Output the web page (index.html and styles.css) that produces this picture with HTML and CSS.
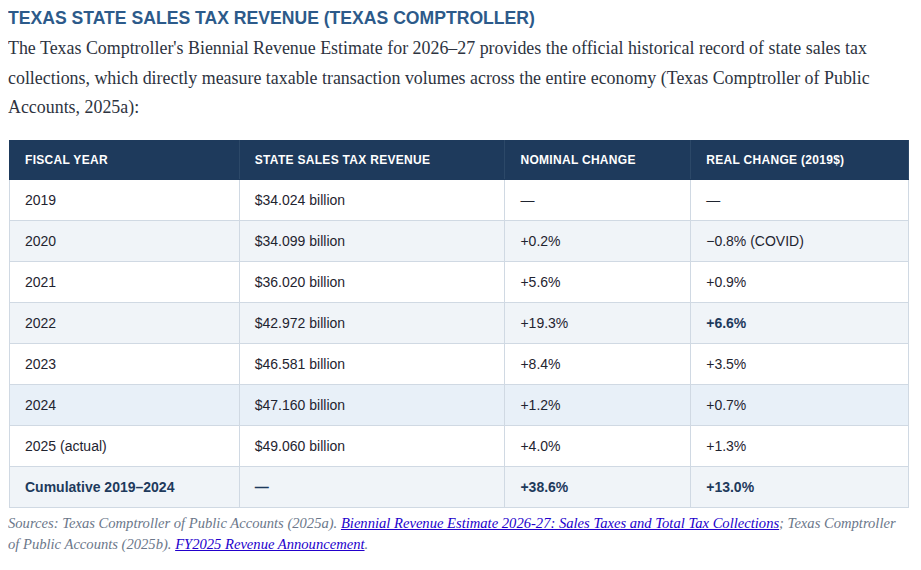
FILE: index.html
```html
<!DOCTYPE html>
<html>
<head>
<meta charset="utf-8">
<link rel="stylesheet" href="styles.css">
</head>
<body>
<h3 class="title">TEXAS STATE SALES TAX REVENUE (TEXAS COMPTROLLER)</h3>
<p class="lead">The Texas Comptroller's Biennial Revenue Estimate for 2026–27 provides the official historical record of state sales tax collections, which directly measure taxable transaction volumes across the entire economy (Texas Comptroller of Public Accounts, 2025a):</p>
<table class="data">
  <colgroup>
    <col class="c1"><col class="c2"><col class="c3"><col class="c4">
  </colgroup>
  <thead>
    <tr><th>Fiscal Year</th><th>State Sales Tax Revenue</th><th>Nominal Change</th><th>Real Change (2019$)</th></tr>
  </thead>
  <tbody>
    <tr><td>2019</td><td>$34.024 billion</td><td>—</td><td>—</td></tr>
    <tr><td>2020</td><td>$34.099 billion</td><td>+0.2%</td><td>−0.8% (COVID)</td></tr>
    <tr><td>2021</td><td>$36.020 billion</td><td>+5.6%</td><td>+0.9%</td></tr>
    <tr><td>2022</td><td>$42.972 billion</td><td>+19.3%</td><td><strong class="hl">+6.6%</strong></td></tr>
    <tr><td>2023</td><td>$46.581 billion</td><td>+8.4%</td><td>+3.5%</td></tr>
    <tr class="hover"><td>2024</td><td>$47.160 billion</td><td>+1.2%</td><td>+0.7%</td></tr>
    <tr><td>2025 (actual)</td><td>$49.060 billion</td><td>+4.0%</td><td>+1.3%</td></tr>
    <tr class="total"><td>Cumulative 2019–2024</td><td>—</td><td>+38.6%</td><td>+13.0%</td></tr>
  </tbody>
</table>
<p class="sources">Sources: Texas Comptroller of Public Accounts (2025a). <a href="#">Biennial Revenue Estimate 2026-27: Sales Taxes and Total Tax Collections</a>; Texas Comptroller of Public Accounts (2025b). <a href="#">FY2025 Revenue Announcement</a>.</p>
</body>
</html>
```
FILE: styles.css
```css
body {
  margin: 8px;
  background: #fff;
  font-family: "Liberation Serif", serif;
  color: #2d3340;
}
.title {
  margin: 0;
  font-family: "Liberation Sans", Arial, sans-serif;
  font-size: 17.6px;
  font-weight: bold;
  color: #2c5a8a;
  line-height: 20px;
}
.lead {
  margin: 6px 0 0 0;
  font-size: 17.9px;
  line-height: 29.5px;
  color: #2d3340;
}
.data {
  margin: 17px 0 0 1px;
  width: 900px;
  border-collapse: collapse;
  font-family: "Liberation Sans", Arial, sans-serif;
  font-size: 14px;
  color: #1f2430;
}
.c1 { width: 230px; }
.c2 { width: 266px; }
.c3 { width: 186px; }
.c4 { width: 218px; }
.data th {
  background: #1e3a5c;
  color: #fff;
  text-transform: uppercase;
  font-size: 12px;
  font-weight: bold;
  letter-spacing: 0.3px;
  text-align: left;
  padding: 12px 15px;
  line-height: 14px;
  border: 1px solid #1e3a5c;
  border-right-color: #2c4868;
}
.data td {
  padding: 12px 15px;
  line-height: 16px;
  border: 1px solid #d0d9e3;
  height: 16px;
}
.data tbody tr:nth-child(even) td { background: #f0f4f8; }
.data tbody tr.hover td { background: #e8f0f8; }
.data tbody tr.total td {
  background: #f0f4f8;
  font-weight: bold;
  color: #1e3a5c;
}
.hl { color: #1e3a5c; }
.sources {
  margin: 5px 0 0 0;
  max-width: 898px;
  font-style: italic;
  font-size: 14.6px;
  line-height: 21px;
  color: #6b778a;
}
.sources a { color: #2200cc; }
```
